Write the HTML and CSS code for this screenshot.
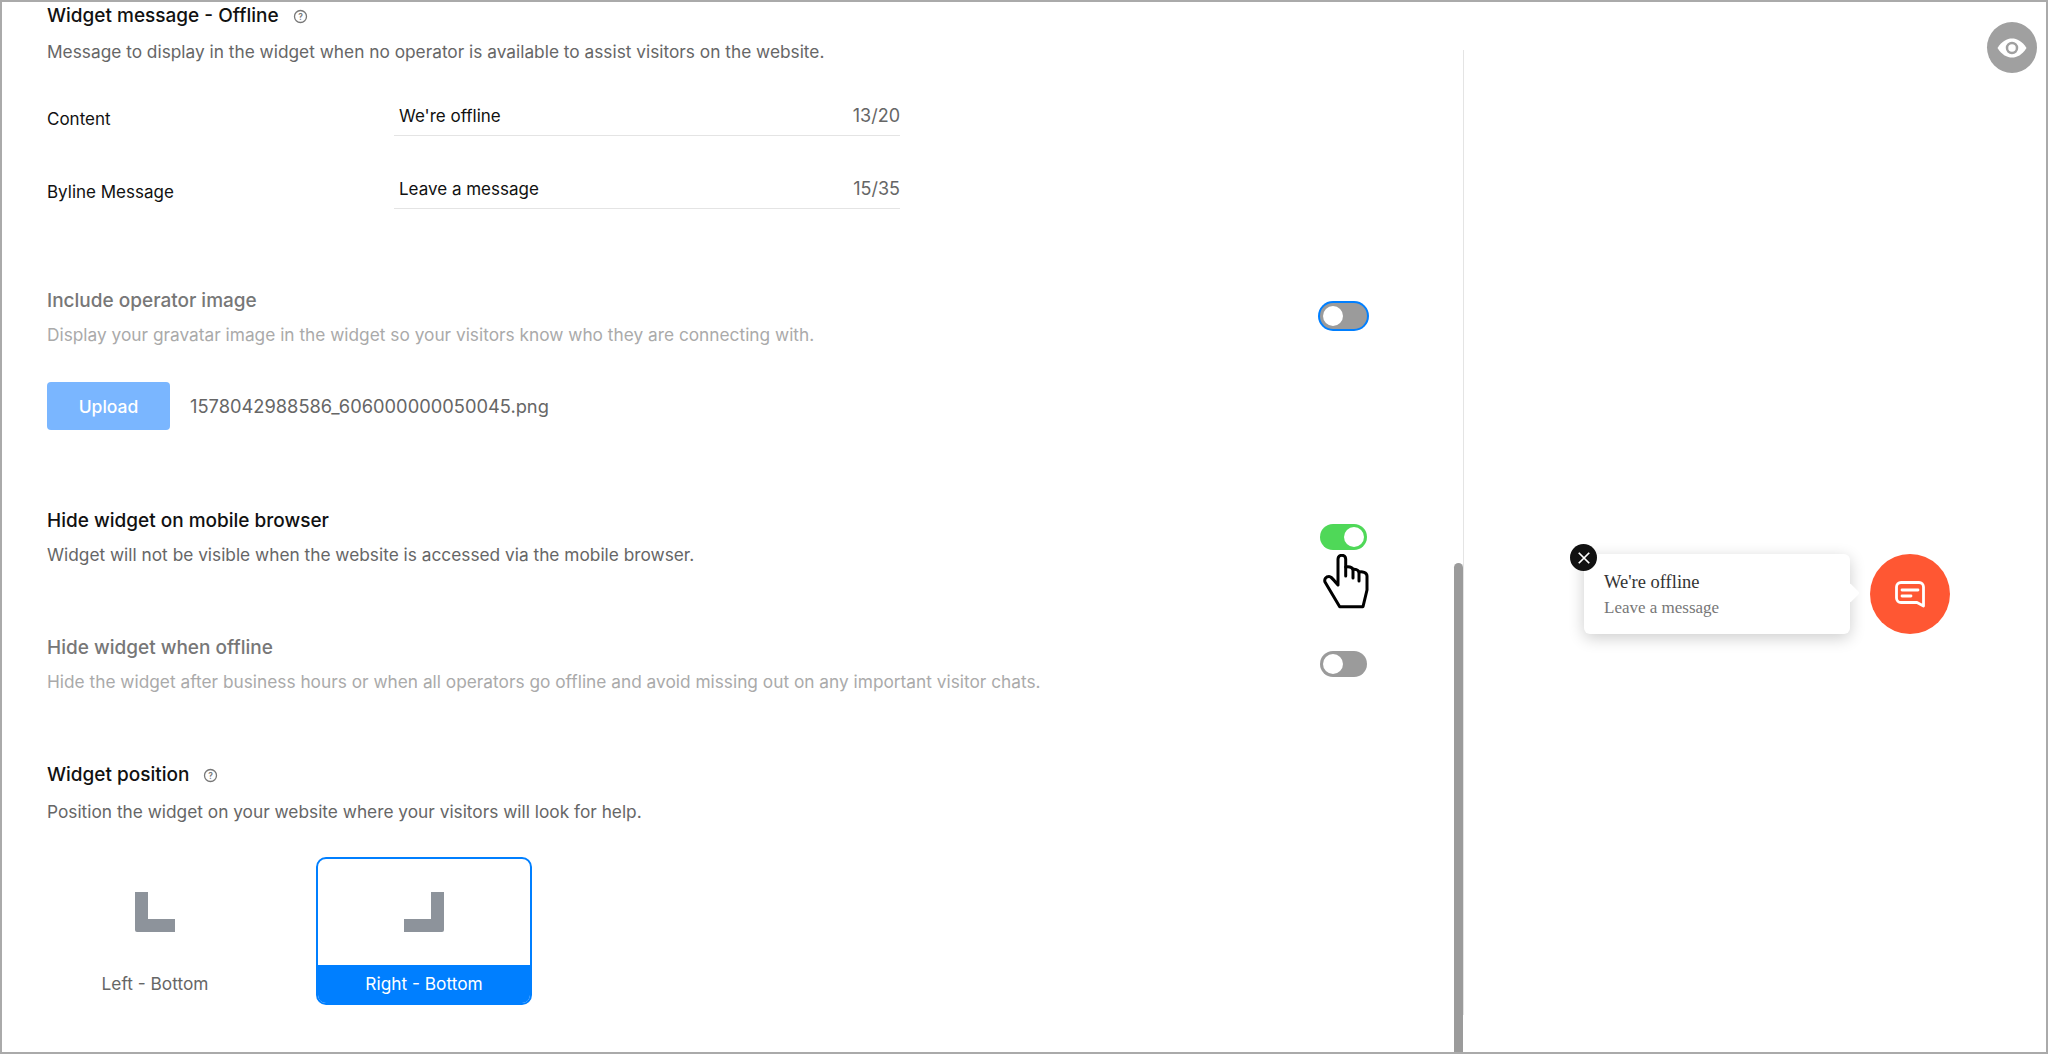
FILE: index.html
```html
<!DOCTYPE html>
<html lang="en">
<head>
    <meta charset="UTF-8">
    <title>Widget settings</title>
    <link rel="stylesheet" href="styles.css">
</head>
<body>
    <div class="frame">
        <div class="settings">
            <!-- offline message -->
            <div class="section-title">
                Widget message - Offline
                <svg class="help" viewBox="0 0 14 14"><circle cx="7" cy="7" r="5.6"/><text x="7" y="10">?</text></svg>
            </div>
            <p class="section-desc">Message to display in the widget when no operator is available to assist visitors on the website.</p>

            <div class="field field-first">
                <div class="field-label">Content</div>
                <div class="field-input"><span>We're offline</span><span class="counter">13/20</span></div>
            </div>
            <div class="field">
                <div class="field-label">Byline Message</div>
                <div class="field-input"><span>Leave a message</span><span class="counter">15/35</span></div>
            </div>

            <!-- operator image -->
            <div class="option option-image">
                <div>
                    <div class="option-title muted">Include operator image</div>
                    <p class="option-desc muted">Display your gravatar image in the widget so your visitors know who they are connecting with.</p>
                </div>
                <div class="toggle toggle-focus"><span class="knob"></span></div>
            </div>
            <div class="upload-row">
                <button class="btn-upload">Upload</button>
                <span class="file-name">1578042988586_606000000050045.png</span>
            </div>

            <div class="option option-mobile">
                <div>
                    <div class="option-title">Hide widget on mobile browser</div>
                    <p class="option-desc">Widget will not be visible when the website is accessed via the mobile browser.</p>
                </div>
                <div class="toggle toggle-on">
                    <span class="knob"></span>
                    <svg class="cursor" viewBox="0 0 46 55">
                        <path d="M16.7 52.7 L2 28 C1 25 3 22.5 6 22.5 C8 22.5 9 24 15 31 L15 5 C15 0 22.7 0 22.7 5 L22.7 13 C26 12.5 29 13 30 15.5 C32 15 35 15.5 36 18 C39 17.5 44 18 44 22 L44 36 L40 52.7 Z"/>
                        <path d="M22.7 13 L22.7 22 M30 15.5 L30 24 M36 18 L36 27"/>
                    </svg>
                </div>
            </div>

            <div class="option option-offline">
                <div>
                    <div class="option-title muted">Hide widget when offline</div>
                    <p class="option-desc muted">Hide the widget after business hours or when all operators go offline and avoid missing out on any important visitor chats.</p>
                </div>
                <div class="toggle"><span class="knob"></span></div>
            </div>

            <!-- position -->
            <div class="section-title section-position">
                Widget position
                <svg class="help" viewBox="0 0 14 14"><circle cx="7" cy="7" r="5.6"/><text x="7" y="10">?</text></svg>
            </div>
            <p class="section-desc">Position the widget on your website where your visitors will look for help.</p>

            <div class="positions">
                <div class="position-card">
                    <div class="position-icon">
                        <svg viewBox="0 0 40 40" width="40" height="40"><path d="M0 0 H13 V27 H40 V40 H2 Q0 40 0 38 Z"/></svg>
                    </div>
                    <div class="position-name">Left - Bottom</div>
                </div>
                <div class="position-card selected">
                    <div class="position-icon">
                        <svg viewBox="0 0 40 40" width="40" height="40"><path d="M40 0 H27 V27 H0 V40 H38 Q40 40 40 38 Z"/></svg>
                    </div>
                    <div class="position-name">Right - Bottom</div>
                </div>
            </div>
            <div class="scroll-thumb"></div>
        </div>

        <div class="preview">
            <div class="eye-btn">
                <svg viewBox="0 0 30 20" width="30" height="20">
                    <path class="eye-white" d="M0.5 10 C5 3 10 0.5 15 0.5 C20 0.5 25 3 29.5 10 C25 17 20 19.5 15 19.5 C10 19.5 5 17 0.5 10 Z"/>
                    <circle class="eye-ring" cx="15" cy="10" r="5"/>
                </svg>
            </div>
            <div class="widget">
                <div class="bubble">
                    <span class="bubble-close">
                        <svg viewBox="0 0 12 12" width="14" height="14"><path d="M1.5 1.5 L10.5 10.5 M10.5 1.5 L1.5 10.5"/></svg>
                    </span>
                    <div class="bubble-title">We're offline</div>
                    <div class="bubble-sub">Leave a message</div>
                    <span class="bubble-arrow"></span>
                </div>
                <div class="chat-btn">
                    <svg viewBox="0 0 30 27" width="30" height="27">
                        <path class="chat-outline" d="M6 1.5 H24 C26.5 1.5 28.5 3.5 28.5 6 V25 L22 21.5 H6 C3.5 21.5 1.5 19.5 1.5 17 V6 C1.5 3.5 3.5 1.5 6 1.5 Z"/>
                        <path class="chat-line" d="M7 9 H23 M7 15 H16"/>
                    </svg>
                </div>
            </div>
        </div>
    </div>
</body>
</html>
```

FILE: styles.css
```css
* {
    margin: 0;
    padding: 0;
    box-sizing: border-box;
}

body {
    font-family: Inter, "Noto Sans", sans-serif;
    font-size: 17.3px;
    line-height: 24px;
    color: #111;
    background: #fff;
}

.frame {
    display: flex;
    width: 2048px;
    height: 1054px;
    border: 2px solid #aaa;
    overflow: hidden;
}

.settings {
    position: relative;
    width: 1461px;
    flex: none;
    padding: 2px 96px 0 45px;
}

.section-title,
.option-title {
    font-size: 19px;
    font-weight: 500;
    color: #111;
}

.section-title {
    display: flex;
    align-items: center;
    gap: 14px;
}

.section-desc {
    margin-top: 12px;
    color: #666;
}

.help {
    width: 15px;
    height: 15px;
}

.help circle {
    fill: none;
    stroke: #777;
    stroke-width: 1.2;
}

.help text {
    font-size: 8px;
    font-weight: 600;
    text-anchor: middle;
    fill: #777;
}

/* fields */
.field {
    display: flex;
    margin-top: 33px;
    font-size: 17px;
}

.field-first {
    margin-top: 32px;
}

.field-label {
    width: 347px;
    padding-top: 11px;
}

.field-input {
    width: 506px;
    height: 40px;
    padding: 8px 0 0 5px;
    display: flex;
    justify-content: space-between;
    border-bottom: 1px solid #e4e4e4;
}

.counter {
    font-size: 18px;
    color: #666;
}

/* toggle rows */
.option {
    display: flex;
    justify-content: space-between;
}

.option-image {
    margin-top: 80px;
}

.option-mobile {
    margin-top: 79px;
}

.option-offline {
    margin-top: 69px;
}

.option-desc {
    margin-top: 10px;
    color: #666;
}

.option-title.muted {
    color: #777;
}

.option-desc.muted {
    color: #aaa;
}

.toggle {
    position: relative;
    flex: none;
    width: 47px;
    height: 26px;
    margin-top: 15px;
    padding: 3px;
    border-radius: 13px;
    background: #9b9b9b;
}

.toggle-focus {
    margin-top: 14px;
    box-shadow: 0 0 0 2px #007fff;
}

.toggle-on {
    background: #4fd858;
}

.toggle-on .knob {
    margin-left: 21px;
}

.knob {
    display: block;
    width: 20px;
    height: 20px;
    border-radius: 50%;
    background: #fff;
}

.cursor {
    position: absolute;
    left: 3px;
    top: 30px;
    width: 46px;
    height: 55px;
}

.cursor path {
    fill: #fff;
    stroke: #000;
    stroke-width: 3;
    stroke-linejoin: round;
    stroke-linecap: round;
}

/* upload */
.upload-row {
    display: flex;
    align-items: center;
    gap: 20px;
    margin-top: 35px;
}

.btn-upload {
    width: 123px;
    height: 48px;
    border: none;
    border-radius: 4px;
    background: #7ab6ff;
    color: #fff;
    font: 500 17.5px Inter, sans-serif;
}

.file-name {
    font-size: 18.3px;
    color: #666;
}

/* position cards */
.section-position {
    margin-top: 69px;
}

.section-position + .section-desc {
    margin-top: 13px;
}

.positions {
    display: flex;
    gap: 53px;
    margin-top: 33px;
}

.position-card {
    width: 216px;
    height: 148px;
    display: flex;
    flex-direction: column;
    border: 2px solid transparent;
    border-radius: 10px;
    overflow: hidden;
}

.position-icon {
    flex: 1;
    display: flex;
    justify-content: center;
    padding-top: 33px;
}

.position-icon svg {
    fill: #8d939b;
}

.position-name {
    height: 38px;
    line-height: 38px;
    text-align: center;
    color: #666;
}

.selected {
    border-color: #007fff;
}

.selected .position-name {
    background: #007fff;
    color: #fff;
}

.scroll-thumb {
    position: absolute;
    right: 0;
    top: 561px;
    bottom: 0;
    width: 9px;
    border-radius: 5px 5px 0 0;
    background: #9b9b9b;
}

/* preview side */
.preview {
    position: relative;
    flex: 1;
    margin: 48px 0 37px;
    border-left: 1px solid #e4e4e4;
    display: flex;
    justify-content: flex-end;
    padding: 504px 96px 0 0;
}

.eye-btn {
    position: absolute;
    top: -28px;
    right: 9px;
    width: 50px;
    height: 51px;
    border-radius: 50%;
    background: #a0a0a0;
    display: flex;
    align-items: center;
    justify-content: center;
}

.eye-white {
    fill: #fff;
}

.eye-ring {
    fill: none;
    stroke: #a0a0a0;
    stroke-width: 2.5;
}

.widget {
    display: flex;
    gap: 20px;
    height: 80px;
}

.bubble {
    position: relative;
    width: 266px;
    height: 80px;
    padding: 15px 20px;
    border-radius: 6px;
    background: #fff;
    box-shadow: 0 4px 16px rgba(0, 0, 0, 0.2);
    font-family: "Liberation Serif", serif;
}

.bubble-title {
    font-size: 18.5px;
    line-height: 26px;
    color: #333;
}

.bubble-sub {
    font-size: 17px;
    line-height: 25px;
    color: #777;
}

.bubble-close {
    position: absolute;
    left: -14px;
    top: -10px;
    width: 27px;
    height: 27px;
    border-radius: 50%;
    background: #111;
    display: flex;
    align-items: center;
    justify-content: center;
}

.bubble-close path {
    stroke: #fff;
    stroke-width: 1.5;
    fill: none;
}

.bubble-arrow {
    position: absolute;
    right: -7px;
    top: 32px;
    width: 14px;
    height: 14px;
    background: #fff;
    transform: rotate(45deg);
    border-radius: 2px;
}

.chat-btn {
    width: 80px;
    height: 80px;
    border-radius: 50%;
    background: #ff5733;
    display: flex;
    align-items: center;
    justify-content: center;
}

.chat-outline,
.chat-line {
    fill: none;
    stroke: #fff;
    stroke-width: 2.8;
    stroke-linejoin: round;
    stroke-linecap: round;
}
```
